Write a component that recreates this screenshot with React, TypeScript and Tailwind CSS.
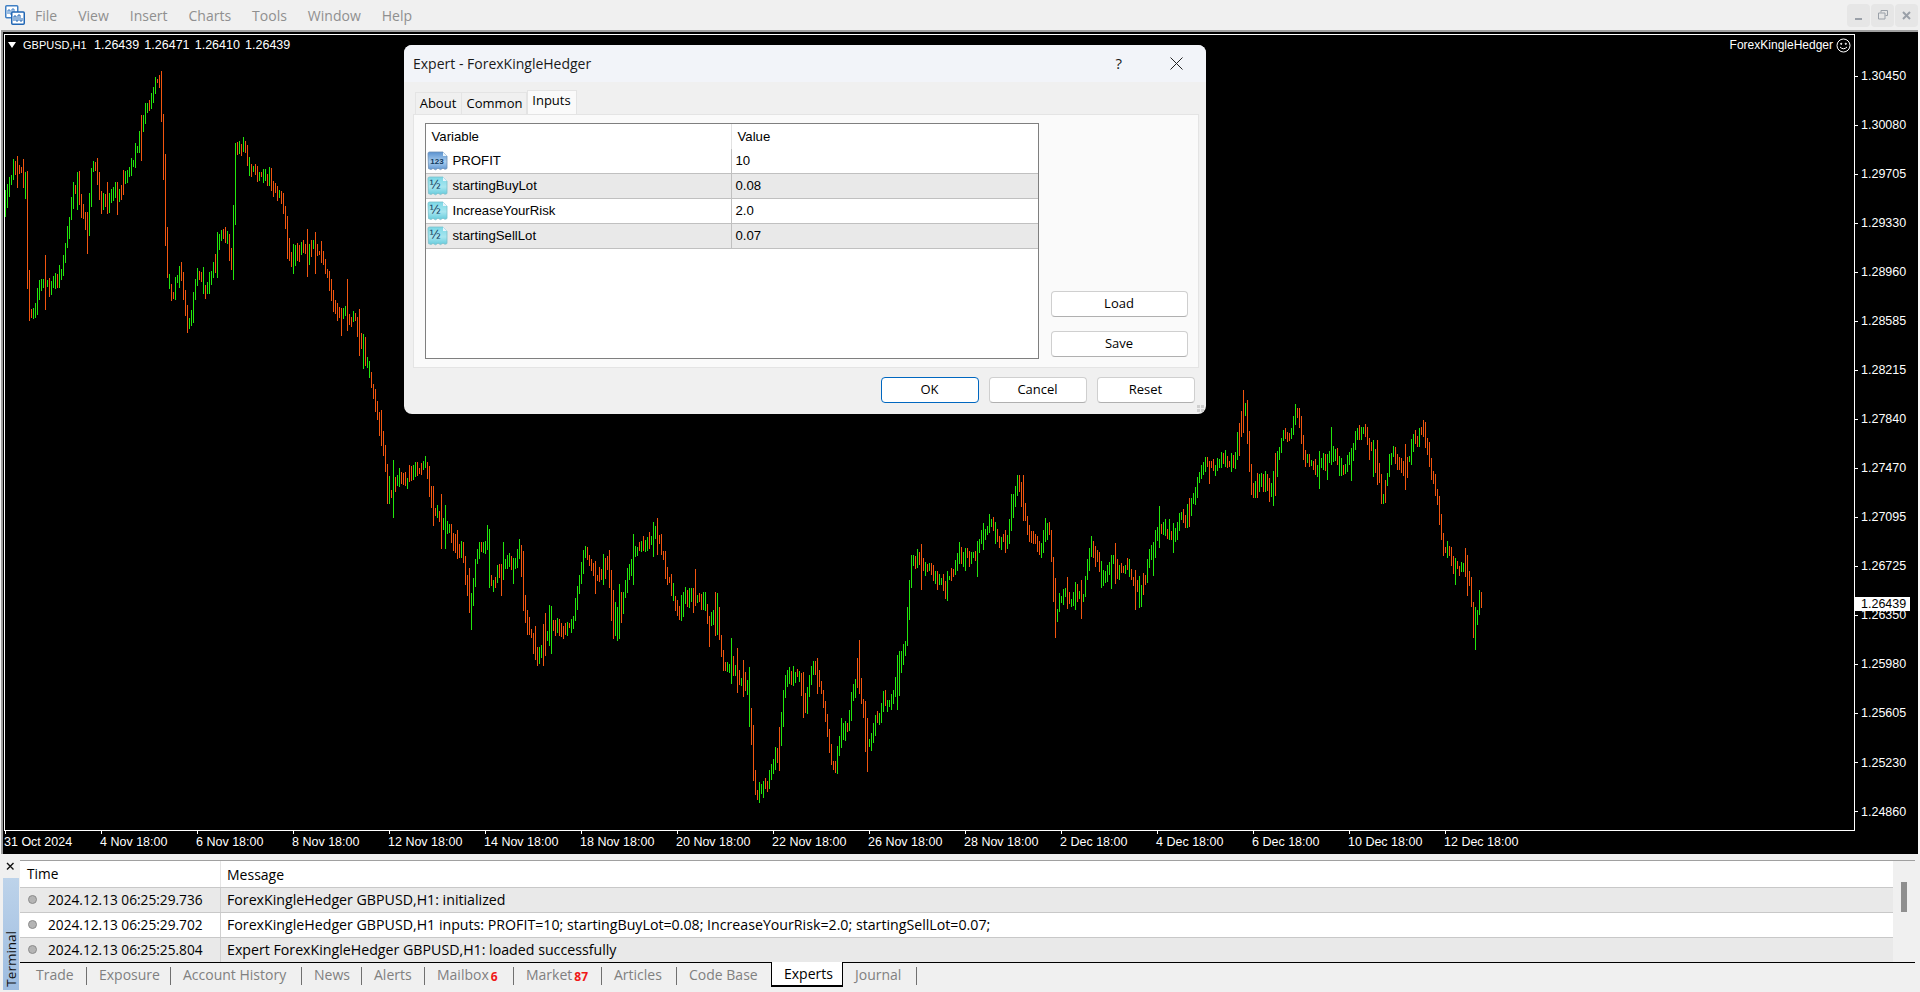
import { useMemo } from 'react'

const SEGOE = 'font-["Open_Sans",sans-serif]'

const menuItems = ['File', 'View', 'Insert', 'Charts', 'Tools', 'Window', 'Help']

const priceLabels = [
  '1.30450', '1.30080', '1.29705', '1.29330', '1.28960', '1.28585', '1.28215', '1.27840',
  '1.27470', '1.27095', '1.26725', '1.26350', '1.25980', '1.25605', '1.25230', '1.24860',
]

const timeLabels = [
  '31 Oct 2024', '4 Nov 18:00', '6 Nov 18:00', '8 Nov 18:00', '12 Nov 18:00', '14 Nov 18:00',
  '18 Nov 18:00', '20 Nov 18:00', '22 Nov 18:00', '26 Nov 18:00', '28 Nov 18:00', '2 Dec 18:00',
  '4 Dec 18:00', '6 Dec 18:00', '10 Dec 18:00', '12 Dec 18:00',
]

const inputs = [
  { name: 'PROFIT', value: '10', kind: 'int' },
  { name: 'startingBuyLot', value: '0.08', kind: 'dbl' },
  { name: 'IncreaseYourRisk', value: '2.0', kind: 'dbl' },
  { name: 'startingSellLot', value: '0.07', kind: 'dbl' },
]

const logRows = [
  { time: '2024.12.13 06:25:29.736', msg: 'ForexKingleHedger GBPUSD,H1: initialized' },
  {
    time: '2024.12.13 06:25:29.702',
    msg: 'ForexKingleHedger GBPUSD,H1 inputs: PROFIT=10; startingBuyLot=0.08; IncreaseYourRisk=2.0; startingSellLot=0.07;',
  },
  { time: '2024.12.13 06:25:25.804', msg: 'Expert ForexKingleHedger GBPUSD,H1: loaded successfully' },
]

const tabs = [
  { label: 'Trade', w: 'w-[63px]' },
  { label: 'Exposure', w: 'w-[84px]' },
  { label: 'Account History', w: 'w-[131px]' },
  { label: 'News', w: 'w-[60px]' },
  { label: 'Alerts', w: 'w-[63px]' },
  { label: 'Mailbox', w: 'w-[89px]', badge: '6' },
  { label: 'Market', w: 'w-[88px]', badge: '87' },
  { label: 'Articles', w: 'w-[75px]' },
  { label: 'Code Base', w: 'w-[94px]', noSep: true },
  { label: 'Experts', w: 'w-[72px]', active: true },
  { label: 'Journal', w: 'w-[74px]' },
]

// price path in page pixels, read off the chart
const path: [number, number][] = [
  [5, 205], [13, 160], [20, 160], [25, 193], [28, 310], [33, 320], [38, 283], [57, 273], [63, 260], [72, 193],
  [78, 193], [87, 240], [90, 177], [95, 160], [100, 200], [115, 197], [127, 173], [140, 133], [148, 100], [160, 85],
  [163, 177], [167, 277], [173, 290], [180, 273], [188, 335], [197, 267], [207, 293], [217, 240], [227, 240],
  [232, 260], [235, 143], [242, 140], [250, 170], [267, 173], [282, 193], [290, 260], [300, 250], [320, 257],
  [333, 307], [350, 313], [363, 343], [373, 392], [384, 443], [387, 495], [401, 473], [426, 467], [430, 510],
  [446, 523], [462, 550], [469, 613], [476, 560], [487, 530], [489, 573], [501, 570], [519, 550], [526, 623],
  [537, 650], [548, 623], [566, 630], [576, 603], [584, 563], [609, 567], [612, 628], [623, 597], [630, 563],
  [655, 530], [666, 577], [676, 607], [694, 590], [709, 613], [717, 613], [723, 670], [734, 673], [748, 693],
  [755, 795], [759, 790], [778, 757], [784, 683], [796, 670], [805, 703], [812, 660], [823, 710], [834, 775],
  [841, 730], [848, 733], [857, 660], [866, 745], [875, 723], [884, 697], [894, 690], [905, 643], [912, 553],
  [930, 570], [944, 587], [959, 557], [973, 550], [989, 517], [996, 533], [1005, 547], [1016, 480], [1025, 530],
  [1041, 547], [1048, 520], [1055, 620], [1066, 590], [1080, 603], [1091, 550], [1101, 577], [1112, 560],
  [1130, 570], [1139, 600], [1148, 563], [1159, 527], [1176, 530], [1191, 500], [1205, 467], [1234, 460],
  [1244, 400], [1250, 477], [1273, 483], [1282, 437], [1296, 412], [1305, 463], [1319, 470], [1334, 457],
  [1344, 473], [1362, 430], [1376, 470], [1382, 505], [1391, 457], [1405, 467], [1412, 443], [1423, 430],
  [1437, 497], [1444, 543], [1453, 567], [1469, 587], [1473, 628], [1479, 603], [1482, 603],
]

function buildBars() {
  let seed = 20241213
  const rnd = () => {
    seed = (seed + 0x6d2b79f5) | 0
    let t = Math.imul(seed ^ (seed >>> 15), 1 | seed)
    t = (t + Math.imul(t ^ (t >>> 7), 61 | t)) ^ t
    return ((t ^ (t >>> 14)) >>> 0) / 4294967296
  }
  let up = ''
  let down = ''
  let seg = 0
  let noise = 0
  let prev = path[0][1]
  for (let x = 5; x <= 1482; x += 2) {
    while (seg < path.length - 2 && path[seg + 1][0] < x) seg++
    const [x0, y0] = path[seg]
    const [x1, y1] = path[seg + 1]
    noise = noise * 0.6 + (rnd() - 0.5) * 15
    const y = y0 + ((y1 - y0) * (x - x0)) / (x1 - x0) + noise
    const long = rnd() > 0.85 ? 22 : 0
    const top = Math.round(Math.min(prev, y) - 1 - rnd() * 7 - long * rnd())
    const bottom = Math.round(Math.max(prev, y) + 1 + rnd() * 7 + long * rnd())
    const segment = `M${x + 0.5} ${top}V${bottom}`
    const rising = y < prev ? rnd() > 0.15 : rnd() > 0.85
    if (rising) up += segment
    else down += segment
    prev = y
  }
  return { up, down }
}

function Logo() {
  return (
    <svg width="20" height="20" viewBox="0 0 20 20" className="shrink-0">
      <rect x="0.75" y="0.75" width="12" height="12" rx="1" fill="#fff" stroke="#3f7fc4" strokeWidth="1.5" />
      <path d="M3 9V5h2v4h2V4h2v4" fill="none" stroke="#3f7fc4" strokeWidth="1" />
      <rect x="6.75" y="7" width="12.5" height="12.25" rx="1" fill="#fff" stroke="#2167b5" strokeWidth="1.5" />
      <path d="M9 16v-5h2v5h2v-6h2v6h2v-3" fill="none" stroke="#2167b5" strokeWidth="1" />
    </svg>
  )
}

function TypeIcon({ kind }: { kind: string }) {
  const int = kind === 'int'
  const id = int ? 'icon-int' : 'icon-dbl'
  return (
    <svg width="21" height="20" viewBox="0 0 21 20" className="shrink-0">
      <defs>
        <linearGradient id={id} x1="0" y1="0" x2="0" y2="1">
          <stop offset="0" stopColor={int ? '#5a92d0' : '#7bd8e6'} />
          <stop offset="0.55" stopColor={int ? '#a9cdee' : '#a8e6ef'} />
          <stop offset="1" stopColor={int ? '#5f96d2' : '#64cbdc'} />
        </linearGradient>
      </defs>
      <path
        d="M1 2.5Q1 1 2.5 1H16l4 4v12.5l-2 .8-2-1.1-2.5 1.4-2.5-1.4-2.5 1.6-2.5-1.4-2 1.1-2.5-.9Z"
        fill={`url(#${id})`}
        stroke={int ? '#6d8fb5' : '#7cbfca'}
        strokeWidth="0.8"
      />
      <path d="M16 1v4h4Z" fill="#e8f4fb" />
      <text
        x={int ? 10 : 8}
        y={13}
        textAnchor="middle"
        fontFamily={int ? 'Liberation Sans, sans-serif' : 'DejaVu Sans, sans-serif'}
        fontSize={int ? 8 : 12}
        fontWeight={int ? 700 : 400}
        fill="#123a5e"
      >
        {int ? '123' : '½'}
      </text>
    </svg>
  )
}

function DialogButton({ label, primary, className }: { label: string; primary?: boolean; className: string }) {
  return (
    <button
      className={`${className} h-[26px] rounded-[4px] border bg-white text-[13px] text-black ${SEGOE} ${
        primary ? 'border-[#0067c0]' : 'border-[#cfcfcf] border-b-[#b0b0b0]'
      }`}
    >
      {label}
    </button>
  )
}

function Chart() {
  const bars = useMemo(buildBars, [])
  return (
    <section className="ml-[1px] mr-[2px] h-[824px] border-l-2 border-t-2 border-[#a0a0a0] bg-black pl-[1px] pt-[2px] font-['Liberation_Sans',sans-serif] text-[12.5px] text-white">
      <div className="flex h-[797px]">
        <div className="relative w-[1851px] shrink-0 overflow-hidden border border-white">
          <svg
            className="absolute left-0 top-0"
            width="1849"
            height="795"
            viewBox="5 35 1849 795"
            shapeRendering="crispEdges"
          >
            <path d={bars.up} stroke="#22e60c" strokeWidth="1" fill="none" />
            <path d={bars.down} stroke="#f2550f" strokeWidth="1" fill="none" />
          </svg>
          <div className="absolute left-[3px] top-[2px] flex h-[16px] items-center">
            <span className="h-0 w-0 border-x-[4px] border-t-[6px] border-x-transparent border-t-white" />
            <span className="ml-[7px] w-[71px] text-[11px]">GBPUSD,H1</span>
            <span className="[word-spacing:1.7px]">1.26439 1.26471 1.26410 1.26439</span>
          </div>
          <div className="absolute right-[3px] top-[2px] flex h-[16px] items-center gap-[3px] text-[12px]">
            <span>ForexKingleHedger</span>
            <svg width="15" height="15" viewBox="0 0 15 15" fill="none" stroke="#fff" strokeWidth="1">
              <circle cx="7.5" cy="7.5" r="6.5" />
              <circle cx="5.2" cy="5.8" r="0.6" fill="#fff" />
              <circle cx="9.8" cy="5.8" r="0.6" fill="#fff" />
              <path d="M4 9q3.5 3.5 7 0" />
            </svg>
          </div>
        </div>
        <div className="relative flex-1 overflow-hidden pt-[17.5px]">
          {priceLabels.map((p) => (
            <div key={p} className="flex h-[49.07px] items-center">
              <span className="h-px w-[3px] bg-white" />
              <span className="ml-[3px]">{p}</span>
            </div>
          ))}
          <div className="absolute left-0 top-[563px] flex h-[14px] w-[55px] items-center bg-white pl-[6px] text-black">
            1.26439
          </div>
        </div>
      </div>
      <div className="flex pl-[1px]">
        {timeLabels.map((t) => (
          <div key={t} className="w-[96px] shrink-0">
            <div className="h-[3px] w-px bg-white" />
            <div className="-ml-px flex h-[16px] items-center whitespace-nowrap">{t}</div>
          </div>
        ))}
      </div>
    </section>
  )
}

function ExpertDialog() {
  return (
    <div className={`absolute left-[404px] top-[45px] flex h-[369px] w-[802px] flex-col overflow-hidden rounded-lg bg-[#f0f0f0] ${SEGOE}`}>
      <div className="flex h-[37px] shrink-0 items-center bg-[#f2f4f9] pl-[9px] text-[14px] text-[#1a1a1a]">
        <span className="flex-1">Expert - ForexKingleHedger</span>
        <span className="mr-[48px] text-[15px]">?</span>
        <svg width="13" height="13" viewBox="0 0 13 13" className="mr-[23px]" stroke="#222" strokeWidth="1">
          <path d="M.5.5l12 12M12.5.5l-12 12" />
        </svg>
      </div>
      <div className="flex h-[32px] shrink-0 items-end pl-[10.5px] text-[13px] text-black">
        <div className="flex h-[22px] w-[47px] items-center justify-center border border-b-0 border-[#e4e4e4] bg-[#f0f0f0]">About</div>
        <div className="flex h-[22px] w-[65px] items-center justify-center border-y border-r border-b-0 border-[#e4e4e4] bg-[#f0f0f0] pl-[2px]">Common</div>
        <div className="flex h-[24px] w-[50px] items-center justify-center border border-b-0 border-[#e4e4e4] bg-[#fafafa] pb-[3px]">Inputs</div>
      </div>
      <div className="ml-[8.5px] flex h-[254px] w-[786px] shrink-0 border border-[#e4e4e4] bg-[#fafafa] pl-[11px] pt-[8px]">
        <div className="h-[236px] w-[614px] shrink-0 overflow-hidden border border-[#7f7f7f] bg-white font-['Liberation_Sans',sans-serif] text-[13.2px] text-black">
          <div className="flex h-[25px] items-center">
            <div className="w-[305px] pl-[6px]">Variable</div>
            <div className="flex h-full items-center border-l border-[#e2e2e2] pl-[6px]">Value</div>
          </div>
          {inputs.map((row, i) => (
            <div
              key={row.name}
              className={`flex h-[25px] items-center border-b border-[#c0c0c0] ${i % 2 ? 'bg-[#e9e9e9]' : 'bg-white'}`}
            >
              <div className="flex w-[305px] items-center gap-[5px] pl-[1px]">
                <TypeIcon kind={row.kind} />
                <span>{row.name}</span>
              </div>
              <div className="flex h-full items-center border-l border-[#c0c0c0] pl-[4px]">{row.value}</div>
            </div>
          ))}
        </div>
        <div className="ml-[12px] flex h-[236px] w-[137px] flex-col justify-end gap-[14px] pb-[2px]">
          <DialogButton label="Load" className="w-[137px]" />
          <DialogButton label="Save" className="w-[137px]" />
        </div>
      </div>
      <div className="relative flex flex-1 justify-end gap-[10px] pr-[11.5px] pt-[9px]">
        <DialogButton label="OK" primary className="w-[98px]" />
        <DialogButton label="Cancel" className="w-[98px]" />
        <DialogButton label="Reset" className="w-[98px]" />
        <div className="absolute bottom-[2px] right-[2px] grid grid-cols-2 gap-px">
          <span className="h-[3px] w-[3px] bg-[#cfcfcf]" />
          <span className="h-[3px] w-[3px] bg-[#cfcfcf]" />
          <span className="h-[3px] w-[3px] bg-[#cfcfcf]" />
          <span className="h-[3px] w-[3px] bg-[#cfcfcf]" />
        </div>
      </div>
    </div>
  )
}

function Terminal() {
  return (
    <section className={`flex h-[138px] bg-[#f0f0f0] ${SEGOE}`}>
      <div className="flex w-[20px] shrink-0 flex-col pl-[3px] pt-[5px]">
        <svg width="14" height="14" viewBox="0 0 14 14" stroke="#111" strokeWidth="1.4">
          <path d="M4 4l6.5 6.5M10.5 4L4 10.5" />
        </svg>
        <div className="mt-[5px] flex h-[112px] w-[16px] flex-col items-center justify-end bg-gradient-to-b from-[#bdd3ea] to-[#9dbce0] pb-[3px]">
          <span className="rotate-180 text-[13.5px] leading-[16px] text-[#111] [writing-mode:vertical-rl]">Terminal</span>
        </div>
      </div>
      <div className="flex w-[1895px] shrink-0 flex-col pt-[6px]">
        <div className="flex h-[102px] border-t border-[#a0a0a0]">
          <div className="w-[1873px] shrink-0 text-[13.7px] text-black">
            <div className="flex h-[26px] items-center bg-white">
              <div className="w-[200px] pl-[7px]">Time</div>
              <div className="flex h-full items-center border-l border-[#e5e5e5] pl-[6px] text-[14px]">Message</div>
            </div>
            {logRows.map((row, i) => (
              <div
                key={row.time}
                className={`flex h-[25px] items-center border-t border-[#c8c8c8] ${i % 2 ? 'bg-white' : 'bg-[#e9e9e9]'}`}
              >
                <div className="flex w-[200px] items-center pl-[8px]">
                  <span className="h-[9px] w-[9px] rounded-full border border-[#8c8c8c] bg-[#b4b4b4]" />
                  <span className="ml-[11px] whitespace-nowrap">{row.time}</span>
                </div>
                <div className="flex h-full items-center border-l border-[#d0d0d0] pl-[6px] text-[14.2px]">{row.msg}</div>
              </div>
            ))}
          </div>
          <div className="ml-[8px] mt-[21px] h-[30px] w-[6px] bg-[#8f8f8f]" />
        </div>
        <div className="flex h-[24px] border-t border-black pl-[4px] text-[14px] text-[#808080]">
          {tabs.map((tab) =>
            tab.active ? (
              <div
                key={tab.label}
                className={`${tab.w} -mt-px flex h-[25px] items-center border-x border-b-2 border-black border-t-black bg-white pl-[12px] text-black`}
              >
                {tab.label}
              </div>
            ) : (
              <div key={tab.label} className={`${tab.w} flex h-[22px] items-center pl-[12px]`}>
                <span className="whitespace-nowrap">{tab.label}</span>
                {tab.badge && (
                  <span className="ml-[2px] mt-[6px] text-[12px] font-bold leading-none text-[#f01818]">{tab.badge}</span>
                )}
                <span className="flex-1" />
                {!tab.noSep && <span className="mt-[4px] h-[18px] w-px bg-[#707070]" />}
              </div>
            ),
          )}
        </div>
      </div>
    </section>
  )
}

export default function App() {
  return (
    <div className="relative h-[992px] w-[1920px] overflow-hidden bg-[#f7f7f7]">
      <header className={`flex h-[30px] items-center bg-[#f0f0f0] pl-[5px] ${SEGOE}`}>
        <Logo />
        <nav className="ml-[10px] flex gap-[21px] text-[14px] text-[#8f8f8f]">
          {menuItems.map((m) => (
            <span key={m}>{m}</span>
          ))}
        </nav>
        <div className="ml-auto mr-[2px] flex gap-px">
          <div className="flex h-[23px] w-[23px] items-center justify-center rounded-sm bg-[#e6e6e6]">
            <span className="mt-[8px] h-[2px] w-[7px] bg-[#9aa0a8]" />
          </div>
          <div className="flex h-[23px] w-[23px] items-center justify-center rounded-sm bg-[#e6e6e6]">
            <svg width="10" height="10" viewBox="0 0 10 10" fill="none" stroke="#9aa0a8" strokeWidth="1">
              <path d="M3 2.5V.5h6.5v5H7.5M.5 3h6.5v6H.5Z" />
            </svg>
          </div>
          <div className="flex h-[23px] w-[23px] items-center justify-center rounded-sm bg-[#e6e6e6]">
            <svg width="9" height="9" viewBox="0 0 9 9" stroke="#9aa0a8" strokeWidth="2">
              <path d="M1 1l7 7M8 1L1 8" />
            </svg>
          </div>
        </div>
      </header>
      <Chart />
      <Terminal />
      <ExpertDialog />
    </div>
  )
}
